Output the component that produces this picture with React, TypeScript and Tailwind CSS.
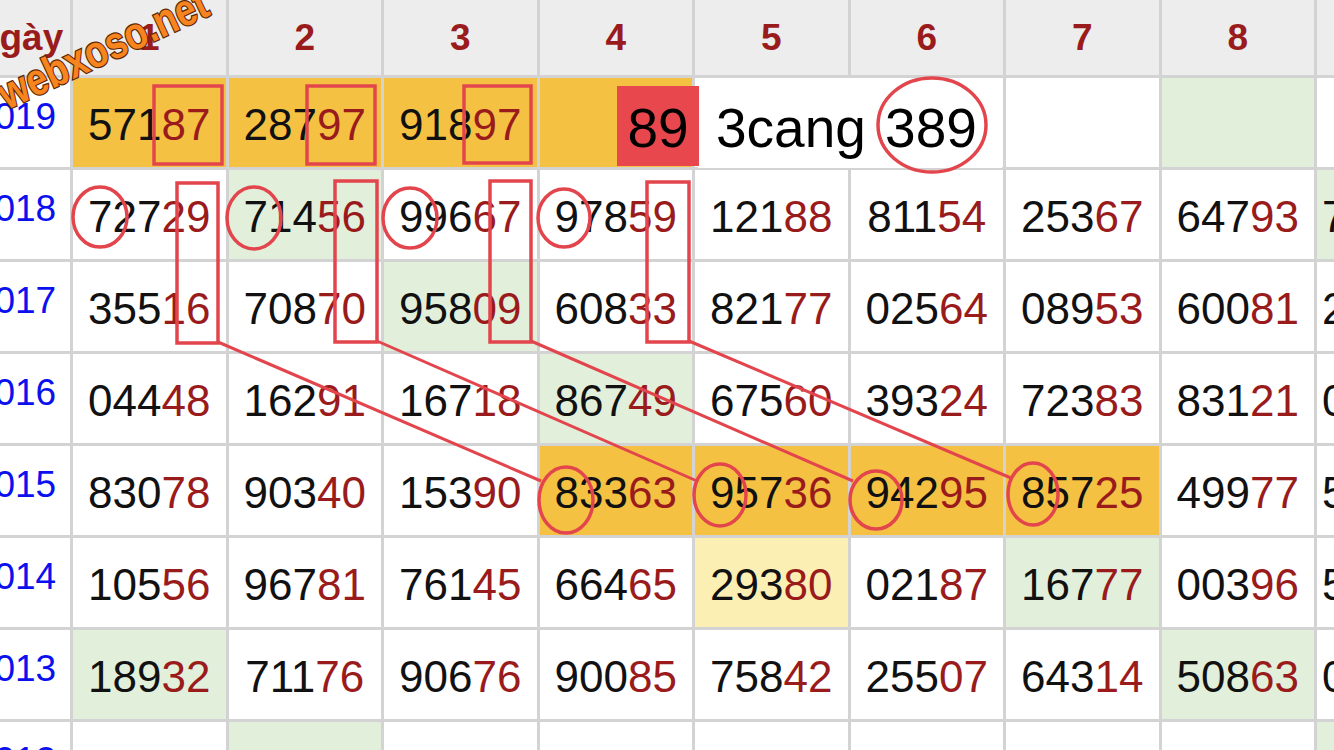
import React from "react";

type Bg = "w" | "o" | "g" | "y";

interface Cell {
  n: string;
  bg?: Bg;
}

interface Row {
  year: string;
  cells: Cell[];
}

const BG: Record<Bg, string> = {
  w: "bg-white",
  o: "bg-[#f5c143]",
  g: "bg-[#e2efda]",
  y: "bg-[#fcefb3]",
};

const ROWS: Row[] = [
  {
    year: "2019",
    cells: [
      { n: "57187", bg: "o" },
      { n: "28797", bg: "o" },
      { n: "91897", bg: "o" },
      { n: "", bg: "o" },
      { n: "" },
      { n: "" },
      { n: "" },
      { n: "", bg: "g" },
      { n: "" },
    ],
  },
  {
    year: "2018",
    cells: [
      { n: "72729" },
      { n: "71456", bg: "g" },
      { n: "99667" },
      { n: "97859" },
      { n: "12188" },
      { n: "81154" },
      { n: "25367" },
      { n: "64793" },
      { n: "73518", bg: "g" },
    ],
  },
  {
    year: "2017",
    cells: [
      { n: "35516" },
      { n: "70870" },
      { n: "95809", bg: "g" },
      { n: "60833" },
      { n: "82177" },
      { n: "02564" },
      { n: "08953" },
      { n: "60081" },
      { n: "24406" },
    ],
  },
  {
    year: "2016",
    cells: [
      { n: "04448" },
      { n: "16291" },
      { n: "16718" },
      { n: "86749", bg: "g" },
      { n: "67560" },
      { n: "39324" },
      { n: "72383" },
      { n: "83121" },
      { n: "01952" },
    ],
  },
  {
    year: "2015",
    cells: [
      { n: "83078" },
      { n: "90340" },
      { n: "15390" },
      { n: "83363", bg: "o" },
      { n: "95736", bg: "o" },
      { n: "94295", bg: "o" },
      { n: "85725", bg: "o" },
      { n: "49977" },
      { n: "53681" },
    ],
  },
  {
    year: "2014",
    cells: [
      { n: "10556" },
      { n: "96781" },
      { n: "76145" },
      { n: "66465" },
      { n: "29380", bg: "y" },
      { n: "02187" },
      { n: "16777", bg: "g" },
      { n: "00396" },
      { n: "57214" },
    ],
  },
  {
    year: "2013",
    cells: [
      { n: "18932", bg: "g" },
      { n: "71176" },
      { n: "90676" },
      { n: "90085" },
      { n: "75842" },
      { n: "25507" },
      { n: "64314" },
      { n: "50863", bg: "g" },
      { n: "06125" },
    ],
  },
  {
    year: "2012",
    cells: [
      { n: "" },
      { n: "", bg: "g" },
      { n: "" },
      { n: "" },
      { n: "" },
      { n: "" },
      { n: "" },
      { n: "" },
      { n: "", bg: "g" },
    ],
  },
];

const HEADERS = ["1", "2", "3", "4", "5", "6", "7", "8", "9"];

const RED = "#e3454d";

// first three digits black, last two dark red
const Num = ({ n }: { n: string }) => (
  <>
    <span className="text-[#111111]">{n.slice(0, 3)}</span>
    <span className="text-[#9a1b1b]">{n.slice(3)}</span>
  </>
);

const Overlay = () => {
  const rectsTop = [
    { x: 154, y: 86, w: 68, h: 78 },
    { x: 307, y: 86, w: 68, h: 78 },
    { x: 464, y: 86, w: 67, h: 77 },
  ];
  const tallRects = [
    { x: 177, y: 183, w: 41, h: 160 },
    { x: 335, y: 181, w: 42, h: 161 },
    { x: 490, y: 181, w: 41, h: 161 },
    { x: 647, y: 182, w: 42, h: 160 },
  ];
  const circlesTop = [
    { cx: 100, cy: 217, rx: 27, ry: 30 },
    { cx: 254, cy: 218, rx: 27, ry: 31 },
    { cx: 410, cy: 218, rx: 27, ry: 30 },
    { cx: 564, cy: 218, rx: 26, ry: 29 },
  ];
  const circlesBottom = [
    { cx: 566, cy: 500, rx: 27, ry: 33 },
    { cx: 720, cy: 495, rx: 26, ry: 31 },
    { cx: 876, cy: 500, rx: 26, ry: 29 },
    { cx: 1033, cy: 494, rx: 25, ry: 31 },
  ];
  const lines = [
    [218, 342, 541, 481],
    [377, 341, 697, 481],
    [531, 341, 853, 481],
    [689, 341, 1011, 478],
  ];

  return (
    <svg
      className="pointer-events-none absolute inset-0"
      width={1334}
      height={750}
      viewBox="0 0 1334 750"
    >
      {/* 3cang annotation */}
      <rect x={698} y={78} width={304} height={90} fill="#ffffff" />
      <rect x={617} y={86} width={82} height={80} fill="#e8474e" />
      <text
        x={658}
        y={147}
        textAnchor="middle"
        fontSize={55}
        fontFamily="'Liberation Sans', Arial, sans-serif"
        fill="#000"
      >
        89
      </text>
      <text
        x={716}
        y={147}
        fontSize={55}
        fontFamily="'Liberation Sans', Arial, sans-serif"
        fill="#000"
      >
        3cang
      </text>
      <text
        x={931}
        y={147}
        textAnchor="middle"
        fontSize={55}
        fontFamily="'Liberation Sans', Arial, sans-serif"
        fill="#000"
      >
        389
      </text>
      <ellipse cx={932} cy={125} rx={54} ry={47} fill="none" stroke={RED} strokeWidth={3.5} />

      <g fill="none" stroke={RED} strokeWidth={3.5}>
        {rectsTop.map((r, i) => (
          <rect key={`rt${i}`} x={r.x} y={r.y} width={r.w} height={r.h} />
        ))}
        {tallRects.map((r, i) => (
          <rect key={`tr${i}`} x={r.x} y={r.y} width={r.w} height={r.h} />
        ))}
        {circlesTop.map((c, i) => (
          <ellipse key={`ct${i}`} {...c} />
        ))}
        {circlesBottom.map((c, i) => (
          <ellipse key={`cb${i}`} {...c} />
        ))}
        {lines.map(([x1, y1, x2, y2], i) => (
          <line key={`l${i}`} x1={x1} y1={y1} x2={x2} y2={y2} strokeWidth={3} />
        ))}
      </g>

      {/* watermark */}
      <text
        x={7}
        y={110}
        transform="rotate(-25 7 110)"
        fontSize={45}
        fontWeight={700}
        fontFamily="'Liberation Sans', Arial, sans-serif"
        fill="#f7841f"
        stroke="#5a2604"
        strokeWidth={2.5}
        paintOrder="stroke"
        textLength={226}
        lengthAdjust="spacingAndGlyphs"
      >
        webxoso.net
      </text>
    </svg>
  );
};

const App = () => {
  return (
    <div className="relative h-[750px] w-[1334px] overflow-hidden bg-white font-['Liberation_Sans',Arial,sans-serif]">
      <div className="-ml-[34px] grid w-max grid-cols-[104px_repeat(9,152.5px)] grid-rows-[75px_repeat(8,89px)] gap-[3px] bg-[#d3d3d3]">
        <div className="flex items-center justify-center bg-[#ededed] text-[37px] font-bold text-[#9a1b1b]">
          Ngày
        </div>
        {HEADERS.map(h => (
          <div
            key={h}
            className="flex items-center justify-center bg-[#ededed] text-[37px] font-bold text-[#9a1b1b]"
          >
            {h}
          </div>
        ))}

        {ROWS.map(row => (
          <React.Fragment key={row.year}>
            <div className="flex items-center justify-center bg-white pr-[6px] pb-3 text-[37px] text-[#0a10ee]">
              {row.year}
            </div>
            {row.cells.map((c, i) => (
              <div
                key={i}
                className={`flex items-center pt-1 text-[44px] ${BG[c.bg ?? "w"]} ${
                  i === 8 ? "justify-start pl-[5px]" : "justify-center"
                }`}
              >
                {c.n && <Num n={c.n} />}
              </div>
            ))}
          </React.Fragment>
        ))}
      </div>
      <Overlay />
    </div>
  );
};

export default App;
